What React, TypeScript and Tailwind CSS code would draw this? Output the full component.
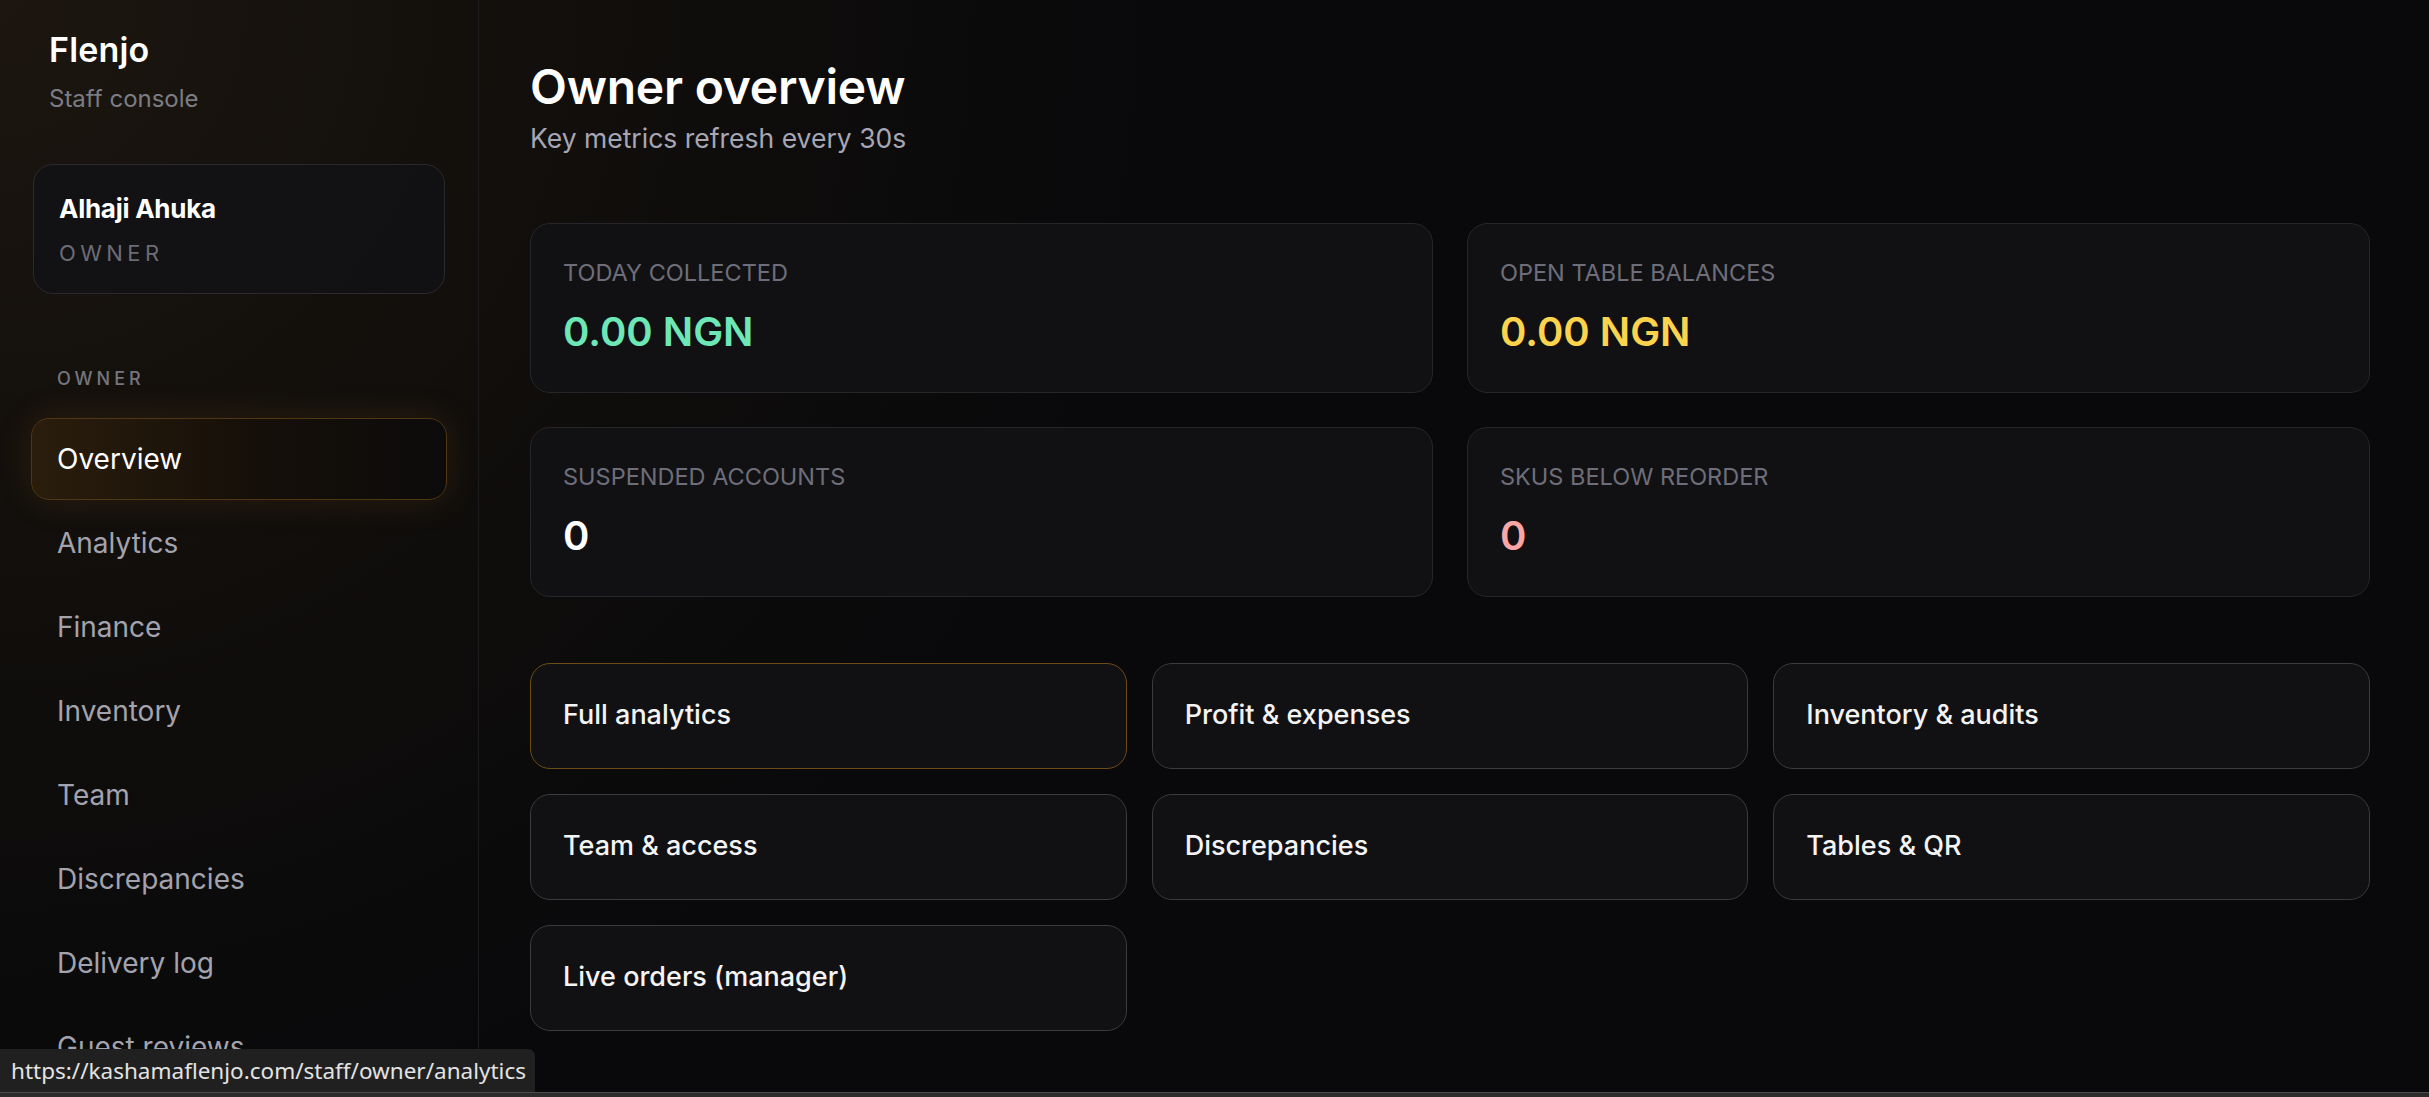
import React from "react";

const navItems = [
  "Overview",
  "Analytics",
  "Finance",
  "Inventory",
  "Team",
  "Discrepancies",
  "Delivery log",
  "Guest reviews",
];

const metrics = [
  { label: "Today collected", value: "0.00 NGN", tone: "text-[#6ee7b7]" },
  { label: "Open table balances", value: "0.00 NGN", tone: "text-[#fcd34d]" },
  { label: "Suspended accounts", value: "0", tone: "text-white" },
  { label: "SKUs below reorder", value: "0", tone: "text-[#fca5a5]" },
];

const links = [
  "Full analytics",
  "Profit & expenses",
  "Inventory & audits",
  "Team & access",
  "Discrepancies",
  "Tables & QR",
  "Live orders (manager)",
];

export default function App() {
  return (
    <div className="flex h-screen flex-col overflow-hidden bg-[#09090b] font-['Inter',sans-serif] text-white">
      <div className="relative flex h-[1092px] bg-[radial-gradient(circle_at_0_0,#1c160f_0px,#120f0c_520px,#09090b_1150px)]">
        {/* sidebar */}
        <aside className="flex w-[479px] shrink-0 flex-col overflow-hidden border-r border-[#1c1c1f] px-[31px]">
          <div className="pl-[18px] pt-[30px]">
            <div className="text-[34px] font-semibold leading-[40px] tracking-[0.005em]">Flenjo</div>
            <div className="mt-[14px] text-[24px] leading-[30px] text-[#7c7c84]">Staff console</div>
          </div>

          <div className="mx-[2px] mt-[50px] rounded-[20px] border border-[#2a2a2e] bg-[#121215]/90 px-[25px] pb-[25px] pt-[28px]">
            <div className="text-[26px] font-bold leading-[32px] tracking-[-0.01em]">Alhaji Ahuka</div>
            <div className="mt-[13px] text-[22px] leading-[30px] tracking-[0.2em] text-[#6c6c75]">OWNER</div>
          </div>

          <div className="mt-[72px] pl-[26px] text-[18px] font-medium leading-[26px] tracking-[0.22em] text-[#75757e]">
            OWNER
          </div>

          <nav className="mt-[26px] flex flex-col gap-[2px]">
            {navItems.map((item, i) =>
              i === 0 ? (
                <div
                  key={item}
                  className="rounded-[18px] border border-[#4f3713] bg-[linear-gradient(90deg,#2a1d0c_0%,#150f09_55%,#0c0b0b_100%)] px-[25px] py-[20px] text-[28px] leading-[40px] text-white shadow-[0_0_34px_rgba(160,105,25,0.18)]"
                >
                  {item}
                </div>
              ) : (
                <div key={item} className="px-[26px] py-[21px] text-[28px] leading-[40px] text-[#a3a3ad]">
                  {item}
                </div>
              )
            )}
          </nav>
        </aside>

        {/* main */}
        <main className="flex-1 pl-[51px] pr-[59px] pt-[58px]">
          <h1 className="text-[48px] font-semibold leading-[1.2] tracking-[-0.005em]">Owner overview</h1>
          <p className="mt-[5px] text-[26.5px] leading-[35px] text-[#a6a6b4]">Key metrics refresh every 30s</p>

          <div className="mt-[67px] grid grid-cols-2 gap-[34px]">
            {metrics.map((m) => (
              <div
                key={m.label}
                className="rounded-[20px] border border-[#26262a] bg-[#111113] px-[32px] pb-[36px] pt-[34px]"
              >
                <div className="text-[23.5px] uppercase leading-[30px] text-[#6e6e7a]">{m.label}</div>
                <div className={`mt-[20px] text-[40px] font-semibold leading-[48px] ${m.tone}`}>{m.value}</div>
              </div>
            ))}
          </div>

          <div className="mt-[66px] grid grid-cols-3 gap-[25px]">
            {links.map((l, i) => (
              <div
                key={l}
                className={`flex h-[106px] items-center rounded-[20px] border bg-[#111113] px-[32px] text-[27px] font-medium text-[#f4f4f5] ${
                  i === 0 ? "border-[#6e4c17]" : "border-[#3a3a3f]"
                }`}
              >
                {l}
              </div>
            ))}
          </div>
        </main>

        {/* browser status bubble */}
        <div className="absolute bottom-0 left-0 flex h-[43px] w-[535px] items-center rounded-tr-[7px] bg-[#202020] pl-[11px] font-['Noto_Sans',sans-serif] text-[22.5px] text-[#e3e3e3]">
          https://kashamaflenjo.com/staff/owner/analytics
        </div>
      </div>
      <div className="h-[5px] border-t border-[#4a4a4a] bg-[#2c2c2c]" />
    </div>
  );
}
